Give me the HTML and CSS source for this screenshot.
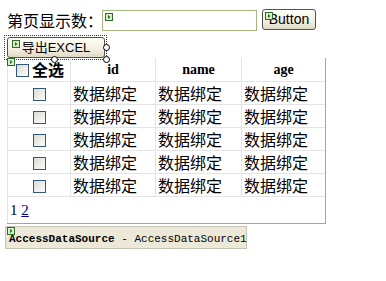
FILE: index.html
```html
<!DOCTYPE html>
<html>
<head>
	<meta charset="utf-8"/>
	<title>分页</title>
	<link rel="stylesheet" href="styles.css">
</head>
<body>
	<div class="page">
		<div class="toprow">
			<span class="label">第页显示数：</span>
			<span class="textbox">
				<svg class="tag" width="8" height="8" viewBox="0 0 8 8"><rect x="0.5" y="0.5" width="7" height="7" fill="#d6efc4" stroke="#2d6a2d"/><path d="M3 2v4l2.5-2z" fill="#2d6a2d"/></svg>
			</span>
			<button class="btn btn-small">
				<svg class="tag" width="8" height="8" viewBox="0 0 8 8"><rect x="0.5" y="0.5" width="7" height="7" fill="#d6efc4" stroke="#2d6a2d"/><path d="M3 2v4l2.5-2z" fill="#2d6a2d"/></svg>
				Button
			</button>
		</div>
		<div class="selrow">
			<div class="sel">
				<button class="btn btn-export">
					<svg class="tag" width="8" height="8" viewBox="0 0 8 8"><rect x="0.5" y="0.5" width="7" height="7" fill="#d6efc4" stroke="#2d6a2d"/><path d="M3 2v4l2.5-2z" fill="#2d6a2d"/></svg>
					导出EXCEL
				</button>
				<span class="handle h-right"></span>
				<span class="handle h-bottom"></span>
				<span class="handle h-corner"></span>
			</div>
		</div>
		<div class="gridwrap">
			<svg class="tag tag-grid" width="8" height="8" viewBox="0 0 8 8"><rect x="0.5" y="0.5" width="7" height="7" fill="#d6efc4" stroke="#2d6a2d"/><path d="M3 2v4l2.5-2z" fill="#2d6a2d"/></svg>
			<table class="grid">
				<tr class="head">
					<td class="c1"><span class="chk"></span><span class="all">全选</span></td>
					<td class="c2">id</td>
					<td class="c3">name</td>
					<td class="c4">age</td>
				</tr>
				<tr><td class="c1 center"><span class="chk"></span></td><td>数据绑定</td><td>数据绑定</td><td>数据绑定</td></tr>
				<tr><td class="c1 center"><span class="chk"></span></td><td>数据绑定</td><td>数据绑定</td><td>数据绑定</td></tr>
				<tr><td class="c1 center"><span class="chk"></span></td><td>数据绑定</td><td>数据绑定</td><td>数据绑定</td></tr>
				<tr><td class="c1 center"><span class="chk"></span></td><td>数据绑定</td><td>数据绑定</td><td>数据绑定</td></tr>
				<tr><td class="c1 center"><span class="chk"></span></td><td>数据绑定</td><td>数据绑定</td><td>数据绑定</td></tr>
				<tr class="pagerrow"><td colspan="4" class="pager">1 <a href="#">2</a></td></tr>
			</table>
		</div>
		<div class="ds">
			<svg class="tag" width="8" height="8" viewBox="0 0 8 8"><rect x="0.5" y="0.5" width="7" height="7" fill="#d6efc4" stroke="#2d6a2d"/><path d="M3 2v4l2.5-2z" fill="#2d6a2d"/></svg>
			<b>AccessDataSource</b> <span class="dsname">- AccessDataSource1</span>
		</div>
	</div>
</body>
</html>
```

FILE: styles.css
```css
body { margin:0; background:#fff; font-family:"Noto Sans CJK SC", sans-serif; color:#000; }
.page { padding:9px 0 0 4px; }

.toprow { display:flex; align-items:flex-start; height:24px; }
.label { font-size:16px; line-height:22px; margin-left:3px; width:95px; white-space:nowrap; }
.textbox { position:relative; width:153px; height:19px; margin-top:1px; border:1px solid #a4b97f; background:#fff; }
.tag { position:absolute; display:block; }
.textbox .tag { left:2px; top:2px; }

.btn { position:relative; padding:0; border:1px solid #55543f; border-radius:3px; background:linear-gradient(#fffef6, #f1efe2 60%, #dedac6); font-family:"Liberation Sans", "Noto Sans CJK SC", sans-serif; font-size:14px; color:#000; }
.btn .tag { left:2px; top:2px; }
.btn-small { width:54px; height:21px; margin-left:5px; line-height:19px; }
.btn-export { display:block; width:98px; height:21px; line-height:19px; font-size:13px; }
.btn-export .tag { left:4px; top:2px; }

.selrow { height:25px; }
.sel { position:relative; display:inline-block; border:1px dotted #333; padding:1px 1px 1px 2px; }
.handle { position:absolute; width:5px; height:5px; border:1px solid #000; border-radius:50%; background:#fff; }
.h-right { right:-4px; top:8px; }
.h-bottom { left:46px; bottom:-4px; }
.h-corner { right:-4px; bottom:-4px; }

.gridwrap { position:relative; width:318px; margin-left:3px; border-right:1px solid #a3a3a3; border-bottom:1px solid #a3a3a3; }
.tag-grid { left:0; top:0; }
.grid { width:100%; border-collapse:collapse; }
.grid td { height:22px; padding:0 2px; border:1px solid #e4e4e4; font-size:16px; line-height:22px; white-space:nowrap; }
.grid tr td:last-child { border-right:none; }
.grid tr:first-child td { border-top:none; }
.grid .head td { height:21px; font-family:"Liberation Serif", serif; font-weight:bold; font-size:14px; text-align:center; }
.grid .head .c1 { text-align:left; font-family:"Noto Sans CJK SC", sans-serif; }
.c1 { width:58px; }
.c2 { width:80px; }
.c3 { width:81px; }
.center { text-align:center; }
.chk { display:inline-block; width:11px; height:11px; border:1px solid #35577c; background:linear-gradient(135deg, #dcdcd6, #fbfbf9); vertical-align:-1px; }
.head .chk { margin-left:6px; margin-right:3px; }
.all { font-size:16px; font-weight:bold; }
.grid .pagerrow td { height:26px; border-bottom:none; padding:0 0 0 2px; font-family:"Liberation Serif", serif; font-size:15px; line-height:26px; }
.pager a { color:#00007f; }

.ds { position:relative; width:240px; height:21px; margin-top:2px; margin-left:1px; border:1px solid #c6c3b4; background:#ece9d8; font-family:"Liberation Mono", monospace; font-size:11px; line-height:24px; white-space:nowrap; }
.ds .tag { left:1px; top:0; }
.ds b { margin-left:3px; }
```
